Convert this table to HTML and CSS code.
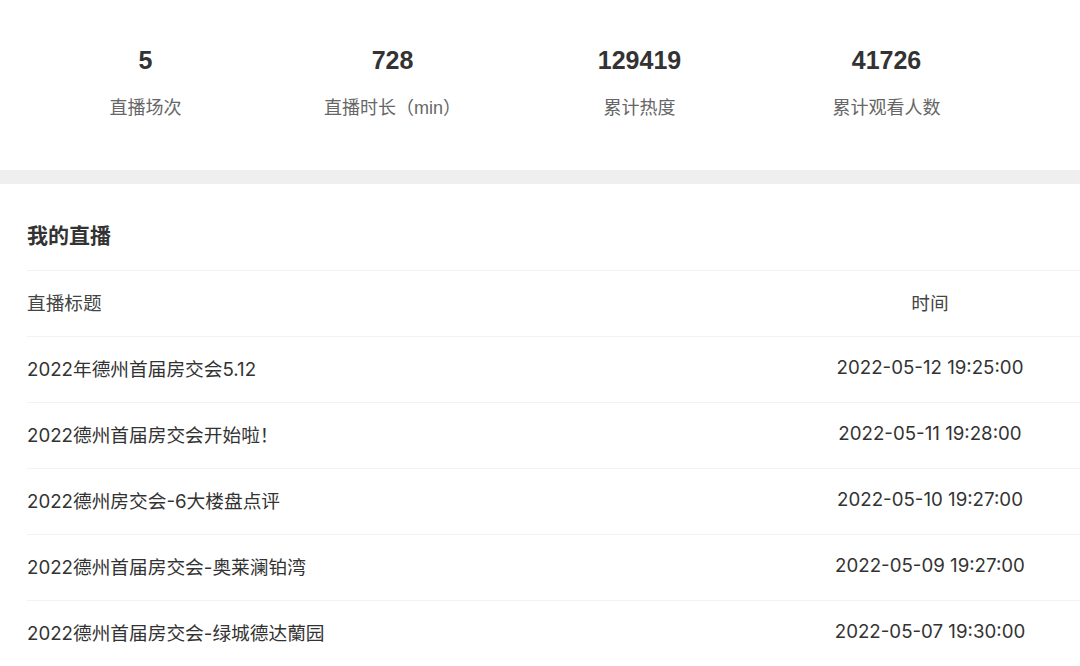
FILE: index.html
```html
<!DOCTYPE html>
<html>
    <head>
        <title>我的直播</title>
        <meta charset="UTF-8">
        <meta name="viewport" content="width=device-width, initial-scale=1">
        <link rel="stylesheet" href="styles.css">
    </head>
    <body>

        <div id="stats">
            <div class="stat">
                <div class="num">5</div>
                <div class="label">直播场次</div>
            </div>
            <div class="stat">
                <div class="num">728</div>
                <div class="label">直播时长（min）</div>
            </div>
            <div class="stat">
                <div class="num">129419</div>
                <div class="label">累计热度</div>
            </div>
            <div class="stat">
                <div class="num">41726</div>
                <div class="label">累计观看人数</div>
            </div>
        </div>

        <div id="live">
            <h2>我的直播</h2>
            <div class="row head">
                <div class="title">直播标题</div>
                <div class="time">时间</div>
            </div>
            <div class="row">
                <div class="title">2022年德州首届房交会5.12</div>
                <div class="time">2022-05-12 19:25:00</div>
            </div>
            <div class="row">
                <div class="title">2022德州首届房交会开始啦！</div>
                <div class="time">2022-05-11 19:28:00</div>
            </div>
            <div class="row">
                <div class="title">2022德州房交会-6大楼盘点评</div>
                <div class="time">2022-05-10 19:27:00</div>
            </div>
            <div class="row">
                <div class="title">2022德州首届房交会-奥莱澜铂湾</div>
                <div class="time">2022-05-09 19:27:00</div>
            </div>
            <div class="row">
                <div class="title">2022德州首届房交会-绿城德达蘭园</div>
                <div class="time">2022-05-07 19:30:00</div>
            </div>
        </div>

    </body>
</html>
```

FILE: styles.css
```css
body {
    margin: 0;
    background: #fff;
    font-family: 'Liberation Sans', 'Noto Sans CJK SC', sans-serif;
    color: #333;
}
#stats {
    display: flex;
    padding: 44px 0 0 22px;
    height: 126px;
    border-bottom: 14px solid #efefef;
}
.stat {
    width: 247px;
    text-align: center;
}
.stat .num {
    font-size: 25px;
    font-weight: bold;
    line-height: 32px;
    color: #333;
}
.stat .label {
    margin-top: 20px;
    font-size: 18px;
    line-height: 24px;
    color: #666;
}
#live {
    padding: 0 0 0 27px;
}
#live h2 {
    margin: 0;
    padding: 38px 0 0;
    height: 48px;
    font-size: 21px;
    line-height: 28px;
    color: #333;
    border-bottom: 1px solid #f2f2f2;
}
.row {
    display: flex;
    align-items: center;
    height: 61px;
    padding-bottom: 4px;
    border-bottom: 1px solid #f2f2f2;
    font-family: Inter, 'Noto Sans CJK SC', sans-serif;
    font-size: 18.7px;
    color: #333;
}
.row .title {
    flex: 1;
}
.row .time {
    width: 300px;
    text-align: center;
}
.row.head {
    color: #444;
}
```
